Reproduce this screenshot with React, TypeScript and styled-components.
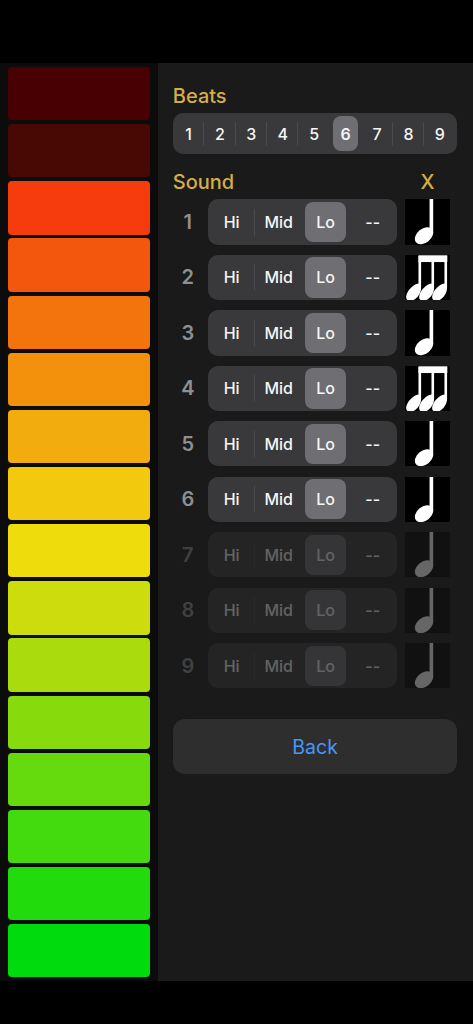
import React from "react";
import styled, { createGlobalStyle } from "styled-components";

const GlobalStyle = createGlobalStyle`
  * { box-sizing: border-box; }
  body { margin: 0; background: #000; }
`;

const Screen = styled.div`
  width: 473px;
  height: 1024px;
  padding: 63px 0 43px;
  display: flex;
  background: #000;
  overflow: hidden;
  font-family: Inter, "Liberation Sans", sans-serif;
`;

const Meter = styled.div`
  width: 157.5px;
  padding: 4px 7.5px 3.5px;
  display: flex;
  flex-direction: column;
  gap: 3.8px;
  background: #0c0c0c;
`;

const MeterBar = styled.div<{ $color: string }>`
  flex: 1;
  border-radius: 4px;
  background: ${(p) => p.$color};
`;

const Panel = styled.main`
  flex: 1;
  padding: 20px 15px 0 15.3px;
  background: #1a1a1a;
`;

const TitleRow = styled.div<{ $above: number; $below: number }>`
  display: flex;
  justify-content: space-between;
  height: 26px;
  line-height: 26px;
  margin: ${(p) => p.$above}px 0 ${(p) => p.$below}px;
  padding-right: 23.5px;
  color: #d4ae48;
  font-size: 20px;
  font-weight: 500;
`;

const Segments = styled.div<{ $height: number; $width: number; $trim: number }>`
  display: flex;
  width: ${(p) => p.$width}px;
  height: ${(p) => p.$height}px;
  padding-right: ${(p) => p.$trim}px;
  border-radius: 10px;
  background: #39393b;
`;

const Segment = styled.button<{ $divider: boolean }>`
  flex: 1 1 0;
  min-width: 0;
  padding: 0;
  border: 0;
  display: flex;
  align-items: center;
  justify-content: center;
  background: ${(p) =>
    p.$divider
      ? "linear-gradient(#4b4b4d, #4b4b4d) right center / 1px 58% no-repeat"
      : "none"};
`;

const SegmentLabel = styled.span<{ $active: boolean; $bold: boolean }>`
  display: flex;
  align-items: center;
  justify-content: center;
  width: calc(100% - 6.2px);
  height: calc(100% - 5px);
  border-radius: 8px;
  background: ${(p) => (p.$active ? "#6e6e73" : "transparent")};
  color: #f5f5f5;
  font: ${(p) => (p.$active && p.$bold ? 600 : 500)} 16px Inter, "Liberation Sans", sans-serif;
`;

const SoundList = styled.div`
  display: flex;
  flex-direction: column;
  gap: 10.15px;
`;

const SoundRow = styled.div`
  display: flex;
  align-items: center;
  height: 45.33px;
`;

const RowNumber = styled.div<{ $disabled: boolean }>`
  width: 30px;
  margin-right: 5.4px;
  text-align: center;
  color: #8f8f8f;
  font-size: 20px;
  font-weight: 600;
  opacity: ${(p) => (p.$disabled ? 0.33 : 1)};
`;

const RowControls = styled.div<{ $disabled: boolean }>`
  display: flex;
  gap: 7.5px;
  opacity: ${(p) => (p.$disabled ? 0.33 : 1)};
`;

const NoteSvg = styled.svg`
  display: block;
  width: 45.3px;
  height: 45.3px;
  background: #000;
`;

const BackButton = styled.button`
  display: block;
  width: 284.6px;
  height: 55px;
  margin-top: 30.3px;
  padding: 1px 0 0;
  border: 0;
  border-radius: 12px;
  background: #2e2e2e;
  color: #4797fa;
  font: 400 19.5px Inter, "Liberation Sans", sans-serif;
`;

const METER_COLORS = [
  "#480003", "#480904", "#f63b0d", "#f3570d", "#f3730c", "#f3900c", "#f3ac0d", "#f2c90d",
  "#efdc0d", "#ccdc0d", "#aadc0d", "#87db0d", "#65db0d", "#43db0e", "#21db0d", "#00db0d",
];
const BEATS = ["1", "2", "3", "4", "5", "6", "7", "8", "9"];
const SOUNDS = ["Hi", "Mid", "Lo", "--"];
const ACTIVE_BEATS = 6;
const TRIPLET_ROWS = [2, 4];

function SegmentedControl(props: {
  items: string[];
  selected: number;
  width: number;
  height: number;
  trim: number;
  bold?: boolean;
}) {
  const { items, selected, width, height, trim, bold = false } = props;
  return (
    <Segments $width={width} $height={height} $trim={trim}>
      {items.map((item, i) => (
        <Segment
          key={item}
          $divider={i < items.length - 1 && i !== selected && i + 1 !== selected}
        >
          <SegmentLabel $active={i === selected} $bold={bold}>
            {item}
          </SegmentLabel>
        </Segment>
      ))}
    </Segments>
  );
}

function QuarterNote() {
  return (
    <NoteSvg viewBox="0 0 45 45" fill="#fff">
      <path d="M24.400 0H28v33.500l-3.600 1z" />
      <ellipse cx="18.900" cy="36.500" rx="10.300" ry="6.900" transform="rotate(-39 18.900 36.500)" />
    </NoteSvg>
  );
}

function Triplet() {
  return (
    <NoteSvg viewBox="0 0 45 45" fill="#fff">
      <path d="M13.400 0.300H42V7H13.400z" />
      {[0, 12.9, 25.8].map((x) => (
        <path
          key={x}
          transform={`translate(${x} 0)`}
          d="M13.400 1H16v31.500C16 37.500 12.500 43 8 45H3.200C1.600 44.500 1 43 1.200 41C1.800 35.500 8 29 13.400 28.200z"
        />
      ))}
    </NoteSvg>
  );
}

export default function App() {
  return (
    <>
      <GlobalStyle />
      <Screen>
        <Meter>
          {METER_COLORS.map((color) => (
            <MeterBar key={color} $color={color} />
          ))}
        </Meter>
        <Panel>
          <TitleRow $above={0} $below={4.4}>Beats</TitleRow>
          <SegmentedControl items={BEATS} selected={5} width={284.4} height={40.3} trim={1.6} bold />
          <TitleRow $above={15} $below={4.6}>
            <span>Sound</span>
            <span>X</span>
          </TitleRow>
          <SoundList>
            {BEATS.map((beat, i) => {
              const disabled = i >= ACTIVE_BEATS;
              return (
                <SoundRow key={beat}>
                  <RowNumber $disabled={disabled}>{beat}</RowNumber>
                  <RowControls $disabled={disabled}>
                    <SegmentedControl items={SOUNDS} selected={2} width={189} height={45.3} trim={1} />
                    {TRIPLET_ROWS.includes(i + 1) ? <Triplet /> : <QuarterNote />}
                  </RowControls>
                </SoundRow>
              );
            })}
          </SoundList>
          <BackButton>Back</BackButton>
        </Panel>
      </Screen>
    </>
  );
}
